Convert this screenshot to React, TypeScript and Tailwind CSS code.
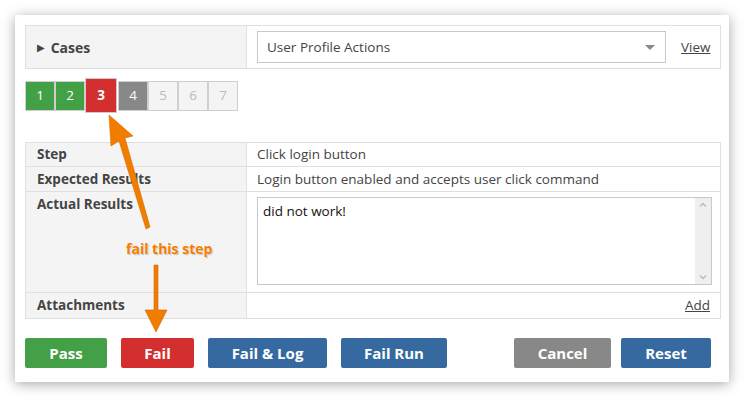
import React from "react";

const font = { fontFamily: '"Open Sans", "DejaVu Sans", sans-serif' };

export default function App() {
  const pages = [
    { n: "1", cls: "bg-[#43a047] text-white border-[#cfcfcf]" },
    { n: "2", cls: "bg-[#43a047] text-white border-[#cfcfcf]" },
    { n: "3", cls: "active" },
    { n: "4", cls: "bg-[#888888] text-white border-[#cfcfcf]" },
    { n: "5", cls: "bg-[#f4f4f4] text-[#bbbbbb] border-[#cfcfcf]" },
    { n: "6", cls: "bg-[#f4f4f4] text-[#bbbbbb] border-[#cfcfcf]" },
    { n: "7", cls: "bg-[#f4f4f4] text-[#bbbbbb] border-[#cfcfcf]" },
  ];
  return (
    <div className="w-[744px] h-[402px] bg-white relative overflow-hidden" style={font}>
      <div className="absolute left-[15px] top-[15px] w-[714px] h-[367px] bg-white shadow-[0_2px_12px_rgba(0,0,0,0.35)] px-[10px] pt-[10px]">
        {/* Cases table */}
        <div className="flex h-[44px] w-[696px] border border-[#e0e0e0] text-[13.5px]">
          <div className="w-[221px] bg-[#f4f4f4] border-r border-[#e0e0e0] flex items-center pl-[11px] font-bold text-[#444]">
            <span className="text-[10px] mr-[6px] text-[#444]">▶</span>
            <span className="text-[14px]">Cases</span>
          </div>
          <div className="flex-1 flex items-center pl-[10px]">
            <div className="w-[409px] h-[32px] border border-[#c8c8c8] flex items-center pl-[9px] pr-[10px] text-[#444]">
              <span className="flex-1">User Profile Actions</span>
              <span className="w-0 h-0 border-l-[5px] border-r-[5px] border-t-[5px] border-l-transparent border-r-transparent border-t-[#888]" />
            </div>
            <span className="ml-[15px] underline text-[#444]">View</span>
          </div>
        </div>

        {/* pagination */}
        <div className="flex items-center h-[35px] mt-[9px] text-[13.5px]">
          {pages.map((p) =>
            p.cls === "active" ? (
              <div key={p.n} className="w-[32px] h-[35px] border border-[#cccccc] bg-[#d32f2f] text-white font-bold flex items-center justify-center mr-[1px]">
                {p.n}
              </div>
            ) : (
              <div key={p.n} className={`w-[30px] h-[30px] border flex items-center justify-center ${p.cls}`}>
                {p.n}
              </div>
            )
          )}
        </div>

        {/* Step table */}
        <div className="mt-[29px] w-[696px] border border-[#e0e0e0] text-[13.5px] text-[#444]">
          <div className="flex h-[24px] border-b border-[#e0e0e0]">
            <div className="w-[221px] bg-[#f4f4f4] border-r border-[#e0e0e0] pl-[11px] font-bold flex items-center">Step</div>
            <div className="flex-1 pl-[10px] flex items-center">Click login button</div>
          </div>
          <div className="flex h-[25px] border-b border-[#e0e0e0]">
            <div className="w-[221px] bg-[#f4f4f4] border-r border-[#e0e0e0] pl-[11px] font-bold flex items-center">Expected Results</div>
            <div className="flex-1 pl-[10px] flex items-center">Login button enabled and accepts user click command</div>
          </div>
          <div className="flex h-[101px] border-b border-[#e0e0e0]">
            <div className="w-[221px] bg-[#f4f4f4] border-r border-[#e0e0e0] pl-[11px] pt-[2px] font-bold">Actual Results</div>
            <div className="flex-1 pl-[10px] pt-[5px]">
              <div className="w-[455px] h-[88px] border border-[#c8c8c8] flex">
                <div className="flex-1 pl-[5px] pt-[3px] text-[#111]">did not work!</div>
                <div className="w-[16px] bg-[#efefef] flex flex-col justify-between items-center py-[4px]">
                  <svg width="8" height="5" viewBox="0 0 8 5"><path d="M1 4.5 L4 1.5 L7 4.5" stroke="#bbb" strokeWidth="1.4" fill="none" /></svg>
                  <svg width="8" height="5" viewBox="0 0 8 5"><path d="M1 0.5 L4 3.5 L7 0.5" stroke="#bbb" strokeWidth="1.4" fill="none" /></svg>
                </div>
              </div>
            </div>
          </div>
          <div className="flex h-[25px]">
            <div className="w-[221px] bg-[#f4f4f4] border-r border-[#e0e0e0] pl-[11px] font-bold flex items-center">Attachments</div>
            <div className="flex-1 flex items-center justify-end pr-[10px] underline">Add</div>
          </div>
        </div>

        {/* Buttons */}
        <div className="flex mt-[19px] text-[15px] font-bold text-white">
          <div className="w-[82px] h-[30px] rounded-[2px] bg-[#43a047] flex items-center justify-center">Pass</div>
          <div className="ml-[14px] w-[73px] h-[30px] rounded-[2px] bg-[#d32f2f] flex items-center justify-center">Fail</div>
          <div className="ml-[14px] w-[119px] h-[30px] rounded-[2px] bg-[#35699f] flex items-center justify-center">Fail &amp; Log</div>
          <div className="ml-[14px] w-[106px] h-[30px] rounded-[2px] bg-[#35699f] flex items-center justify-center">Fail Run</div>
          <div className="ml-[67px] w-[97px] h-[30px] rounded-[2px] bg-[#888888] flex items-center justify-center">Cancel</div>
          <div className="ml-[10px] w-[90px] h-[30px] rounded-[2px] bg-[#35699f] flex items-center justify-center">Reset</div>
        </div>
      </div>

      {/* annotation arrows */}
      <svg className="absolute left-0 top-0 pointer-events-none" width="744" height="402">
        <g>
          <polygon points="109,115 133,136 125,138 150,227 146,229 119,141 111,146" fill="#f07c00" stroke="#d86a00" strokeWidth="0.6" />
          <polygon points="154,265 158,265 158,310 167,310 156,332 145,310 154,310" fill="#f07c00" stroke="#d86a00" strokeWidth="0.6" />
        </g>
      </svg>
      <div
        className="absolute left-[126px] top-[238px] text-[14px] font-bold text-[#f57c00]"
        style={{ textShadow: "0 0 2px #fff, 1px 1px 1px rgba(0,0,0,0.25)" }}
      >
        fail this step
      </div>
    </div>
  );
}
